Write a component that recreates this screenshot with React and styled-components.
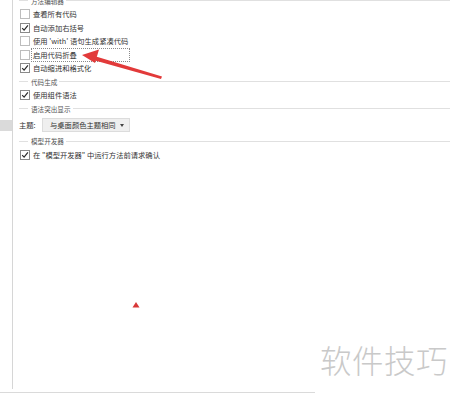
import React from "react"
import styled, { createGlobalStyle } from "styled-components"

const GlobalStyle = createGlobalStyle`
  html, body {
    margin: 0;
    padding: 0;
    background: #fff;
  }
  body {
    font-family: "Noto Sans CJK SC", "Noto Sans", sans-serif;
    color: #333;
  }
`;

const Screen = styled.div`
  position: relative;
  width: 450px;
  height: 395px;
  overflow: hidden;
  background: #fff;
`;

const Body = styled.div`
  display: flex;
  height: 389px;
`;

const SidePanel = styled.div`
  width: 12px;
  flex: none;
  border-right: 1px solid #d6d6d6;
  padding-top: 120px;
  box-sizing: content-box;
`;

const SideSelection = styled.div`
  height: 11px;
  background: #dadada;
`;

const Content = styled.div`
  flex: 1;
  padding-left: 7px;
  margin-top: -6px;
  display: flex;
  flex-direction: column;
`;

const BottomRule = styled.div`
  width: 315px;
  margin-top: 3px;
  border-top: 1px solid #dadada;
`;

const Heading = styled.div`
  display: flex;
  align-items: center;
  height: 13.5px;
  margin-left: -1px;
  font-size: 6.6px;
  color: #555;
  &::before, &::after {
    content: "";
    height: 1px;
    background: #e0e0e0;
  }
  &::before {
    width: 9px;
  }
  &::after {
    flex: 1;
  }
  span {
    padding: 0 2px 0 3px;
  }
`;

const Row = styled.div`
  display: flex;
  align-items: center;
  height: 13.5px;
  font-size: 7.3px;
`;

const Box = styled.span`
  width: 8px;
  height: 8px;
  flex: none;
  border: 1px solid ${p => (p.$checked ? "#8a8a8a" : "#bdbdbd")};
  background: #fff;
  margin-right: 3px;
  display: flex;
  align-items: center;
  justify-content: center;
`;

const Label = styled.span`
  white-space: nowrap;
  ${p => p.$focused && `
    outline: 1px dotted #8a8a8a;
    outline-offset: 0;
    width: 96px;
    padding: 1px 0 1px 1px;
    margin-left: -1px;
  `}
`;

const ThemeRow = styled.div`
  display: flex;
  align-items: center;
  height: 19px;
  margin-left: -1px;
  font-size: 7.3px;
`;

const ThemeLabel = styled.span`
  width: 23px;
`;

const Select = styled.div`
  width: 88px;
  height: 14px;
  box-sizing: border-box;
  display: flex;
  align-items: center;
  justify-content: space-between;
  padding: 0 5px 0 7px;
  background: #efefef;
  border: 1px solid #dcdcdc;
  font-size: 7.3px;
`;

const Caret = styled.span`
  width: 0;
  height: 0;
  border-left: 2.5px solid transparent;
  border-right: 2.5px solid transparent;
  border-top: 3px solid #444;
`;

const Overlay = styled.svg`
  position: absolute;
  left: 0;
  top: 0;
  pointer-events: none;
`;

const Watermark = styled.div`
  position: absolute;
  left: 320px;
  top: 336px;
  font-size: 31.5px;
  font-weight: 300;
  letter-spacing: 0.5px;
  color: #c9c9c9;
  white-space: nowrap;
`;

const Check = () => (
  <svg width="8" height="8" viewBox="0 0 8 8">
    <path d="M1.2 4.2 L3.1 6.2 L6.9 1.4" fill="none" stroke="#2a2a2a" strokeWidth="1.2" />
  </svg>
)

const CheckRow = ({ checked, focused, children }) => (
  <Row>
    <Box $checked={checked}>{checked && <Check />}</Box>
    <Label $focused={focused}>{children}</Label>
  </Row>
)

const App = () => (
  <Screen>
    <GlobalStyle />
    <Body>
      <SidePanel>
        <SideSelection />
      </SidePanel>
      <Content>
        <Heading><span>方法编辑器</span></Heading>
        <CheckRow>查看所有代码</CheckRow>
        <CheckRow checked>自动添加右括号</CheckRow>
        <CheckRow>使用 'with' 语句生成紧凑代码</CheckRow>
        <CheckRow focused>启用代码折叠</CheckRow>
        <CheckRow checked>自动缩进和格式化</CheckRow>
        <Heading><span>代码生成</span></Heading>
        <CheckRow checked>使用组件语法</CheckRow>
        <Heading><span>语法突出显示</span></Heading>
        <ThemeRow>
          <ThemeLabel>主题:</ThemeLabel>
          <Select>
            <span>与桌面颜色主题相同</span>
            <Caret />
          </Select>
        </ThemeRow>
        <Heading><span>模型开发器</span></Heading>
        <CheckRow checked>在 "模型开发器" 中运行方法前请求确认</CheckRow>
      </Content>
    </Body>
    <BottomRule />

    <Overlay width="450" height="395">
      <polygon points="96,56.5 162,76.5 161,79 95,60.5" fill="#e23a3a" />
      <polygon points="82,55 99,49.5 95,63" fill="#e23a3a" />
      <polygon points="136,302 139.5,307.5 132.5,307.5" fill="#d83838" />
    </Overlay>
    <Watermark>软件技巧</Watermark>
  </Screen>
)

export default App
